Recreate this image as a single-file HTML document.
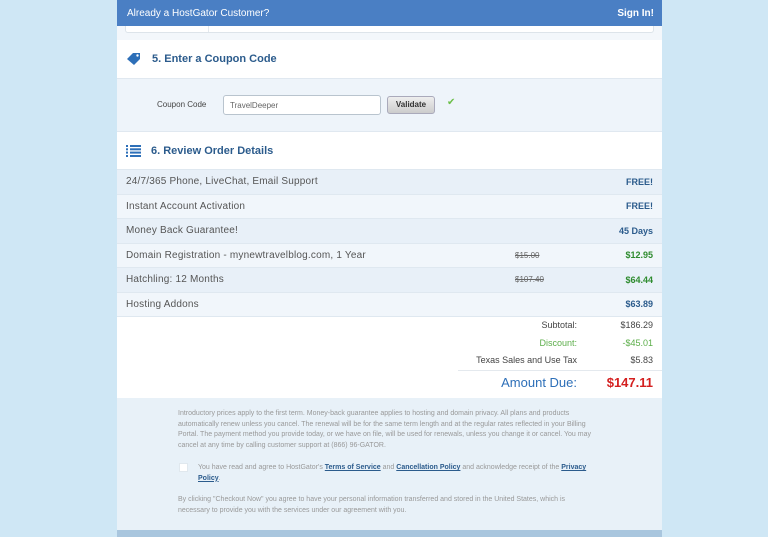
<!DOCTYPE html>
<html><head><meta charset="utf-8"><style>
*{margin:0;padding:0;box-sizing:border-box}
body{width:768px;height:537px;background:#cfe7f5;font-family:"Liberation Sans",sans-serif;position:relative;overflow:hidden}
.card{position:absolute;left:117px;top:0;width:545px;height:537px;background:#fff}
.top{height:26px;background:#4a7fc4;color:#fff;font-size:10px;display:flex;justify-content:space-between;align-items:center;padding:0 8px 0 10px}
.top b{font-size:10px}
.strip{height:14px;background:#f3f7fb;position:relative}
.strip div{position:absolute;left:8px;right:8px;top:0;height:7px;border:1px solid #dde4ea;border-top:none;border-radius:0 0 3px 3px;background:#fff}
.strip div i{position:absolute;left:82px;top:0;bottom:0;border-left:1px solid #e4e9ee}
.sh{height:38px;display:flex;align-items:center;color:#2b5b8c;font-weight:bold;font-size:11px;padding-left:9px}
.sh svg{margin-right:10px}
.coupon{height:54px;background:#eef4fa;border-top:1px solid #e0e8f0;border-bottom:1px solid #e0e8f0;position:relative;font-size:8px;color:#444}
.coupon .l{position:absolute;left:40px;top:21px}
.coupon .in{position:absolute;left:106px;top:16px;width:158px;height:20px;border:1px solid #b9c4ce;border-radius:3px;background:#fff;padding:5px 6px;color:#666}
.coupon .btn{position:absolute;left:270px;top:17px;width:48px;height:18px;border:1px solid #aab;border-radius:3px;background:linear-gradient(#eee,#ccc);font-weight:bold;text-align:center;line-height:16px;color:#333}
.coupon .ck{position:absolute;left:330px;top:18px;color:#6cbf4a;font-size:10px}
.row{height:24.5px;display:flex;align-items:center;padding:0 9px;font-size:10px;letter-spacing:.2px;color:#555;border-bottom:1px solid #dfe8f0;position:relative}
.row.a{background:#e8f0f8}.row.b{background:#f1f6fb}
.row .r{position:absolute;right:9px;font-weight:bold;color:#2b5b8c;font-size:9px;letter-spacing:0}
.row .r.g{color:#2e8b2e}
.row .s{position:absolute;left:398px;text-decoration:line-through;color:#666;font-size:8px;letter-spacing:0}
.tot{height:82px;position:relative;font-size:9px;color:#444}
.tot div{position:absolute;text-align:right}
.foot{position:absolute;top:398px;left:0;right:0;height:132px;background:#e8f1f8;font-size:7px;color:#999;line-height:10.5px}
.foot p{position:absolute;left:61px;width:420px}
.foot a{color:#2b5b8c;font-weight:bold;text-decoration:underline}
.bot{position:absolute;top:530px;left:0;right:0;height:7px;background:#a9c6de}
</style></head><body>
<div class="card">
<div class="top"><span>Already a HostGator Customer?</span><b>Sign In!</b></div>
<div class="strip"><div><i></i></div></div>
<div class="sh"><svg width="16" height="14" viewBox="0 0 16 14"><path d="M1 7 L7 1 L14 1 L14 7 L8 13 Z" fill="#2d6fb8"/><circle cx="11.5" cy="3.5" r="1.2" fill="#fff"/></svg>5. Enter a Coupon Code</div>
<div class="coupon"><span class="l">Coupon Code</span><div class="in">TravelDeeper</div><div class="btn">Validate</div><span class="ck">✔</span></div>
<div class="sh" style="height:37px"><svg width="15" height="12" viewBox="0 0 15 12"><g fill="#2d6fb8"><rect x="0" y="0" width="2" height="2"/><rect x="4" y="0" width="11" height="2"/><rect x="0" y="3.3" width="2" height="2"/><rect x="4" y="3.3" width="11" height="2"/><rect x="0" y="6.6" width="2" height="2"/><rect x="4" y="6.6" width="11" height="2"/><rect x="0" y="10" width="2" height="2"/><rect x="4" y="10" width="11" height="2"/></g></svg>6. Review Order Details</div>
<div style="border-top:1px solid #dfe8f0">
<div class="row a">24/7/365 Phone, LiveChat, Email Support<span class="r">FREE!</span></div>
<div class="row b">Instant Account Activation<span class="r">FREE!</span></div>
<div class="row a">Money Back Guarantee!<span class="r">45 Days</span></div>
<div class="row b">Domain Registration - mynewtravelblog.com, 1 Year<span class="s">$15.00</span><span class="r g">$12.95</span></div>
<div class="row a">Hatchling: 12 Months<span class="s">$107.40</span><span class="r g">$64.44</span></div>
<div class="row b">Hosting Addons<span class="r">$63.89</span></div>
</div>
<div class="tot">
<div style="right:85px;top:3px">Subtotal:</div><div style="right:9px;top:3px">$186.29</div>
<div style="right:85px;top:21px;color:#5cae4a">Discount:</div><div style="right:9px;top:21px;color:#5cae4a">-$45.01</div>
<div style="right:85px;top:38px">Texas Sales and Use Tax</div><div style="right:9px;top:38px">$5.83</div>
<div style="left:341px;right:0;top:53px;border-top:1px solid #e4e9ee;height:0"></div>
<div style="right:85px;top:58px;font-size:13px;color:#2d6fb8">Amount Due:</div><div style="right:9px;top:58px;font-size:13px;font-weight:bold;color:#d42020">$147.11</div>
</div>
<div class="foot">
<p style="top:11px">Introductory prices apply to the first term. Money-back guarantee applies to hosting and domain privacy. All plans and products automatically renew unless you cancel. The renewal will be for the same term length and at the regular rates reflected in your Billing Portal. The payment method you provide today, or we have on file, will be used for renewals, unless you change it or cancel. You may cancel at any time by calling customer support at (866) 96-GATOR.</p>
<div style="position:absolute;left:62px;top:65px;width:9px;height:9px;background:#fff;border:1px solid #e0e8ee"></div>
<p style="top:65px;left:81px;width:400px">You have read and agree to HostGator's <a>Terms of Service</a> and <a>Cancellation Policy</a> and acknowledge receipt of the <a>Privacy Policy</a>.</p>
<p style="top:97px">By clicking "Checkout Now" you agree to have your personal information transferred and stored in the United States, which is necessary to provide you with the services under our agreement with you.</p>
</div>
<div class="bot"></div>
</div>
</body></html>
